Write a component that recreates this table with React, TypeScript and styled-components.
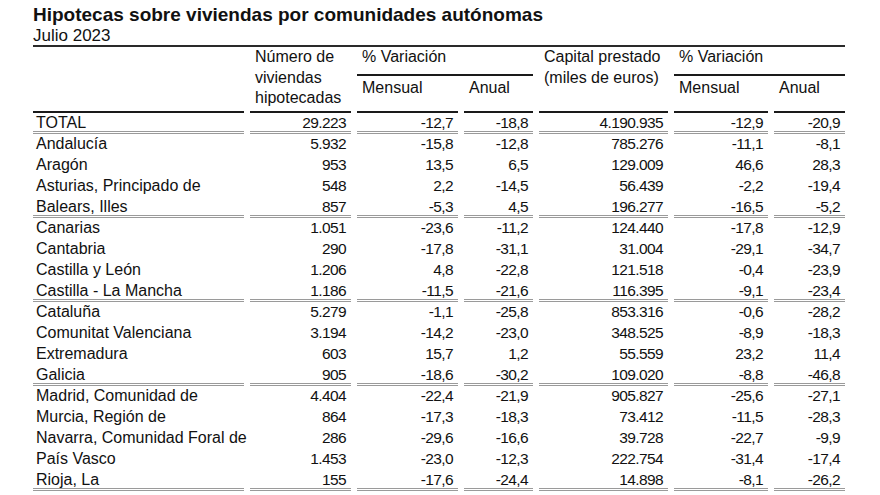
import React from "react";
import styled, { createGlobalStyle } from "styled-components";

const GlobalStyle = createGlobalStyle`
  body {
    margin: 0;
    background: #ffffff;
    color: #111;
    font-family: "Liberation Sans", Arial, sans-serif;
  }
`;

const COLS = "211px 101px 101px 69px 129px 94px 71px";

const Page = styled.div`
  padding: 4px 0 0 33px;
  width: 812px;
`;

const Title = styled.h1`
  margin: 0;
  font-size: 19px;
  line-height: 22px;
  font-weight: bold;
  color: #111;
`;

const Subtitle = styled.div`
  margin-top: 1px;
  font-size: 17px;
  line-height: 18px;
`;

const Table = styled.div`
  border-top: 2px solid #2a2a2a;
`;

const Head = styled.div`
  display: grid;
  grid-template-columns: ${COLS};
  grid-template-rows: 29px 37px;
  column-gap: 6px;
  font-size: 16px;
`;

const HeadCell = styled.div<{ $col: string; $row: string }>`
  grid-column: ${(p) => p.$col};
  grid-row: ${(p) => p.$row};
  box-sizing: border-box;
  padding: ${(p) => (p.$row === "2" ? "2px 0 0 5px" : "0 0 0 5px")};
  line-height: 20.5px;
  border-bottom: 2px solid #1a1a1a;
  white-space: nowrap;
`;

const Row = styled.div`
  display: grid;
  grid-template-columns: ${COLS};
  column-gap: 6px;
  height: 21px;
`;

const Cell = styled.div<{ $sep?: boolean; $num?: boolean }>`
  box-sizing: border-box;
  height: 21px;
  line-height: 19px;
  white-space: nowrap;
  border-bottom: ${(p) => (p.$sep ? "3px double #9a9a9a" : "none")};
  text-align: ${(p) => (p.$num ? "right" : "left")};
  padding: ${(p) => (p.$num ? "0 5px 0 0" : "0 0 0 3px")};
  font-size: ${(p) => (p.$num ? "15.5px" : "16px")};
  letter-spacing: ${(p) => (p.$num ? "-0.6px" : "0")};
`;

type Data = [string, string, string, string, string, string, string, boolean];

const rows: Data[] = [
  ["TOTAL", "29.223", "-12,7", "-18,8", "4.190.935", "-12,9", "-20,9", true],
  ["Andalucía", "5.932", "-15,8", "-12,8", "785.276", "-11,1", "-8,1", false],
  ["Aragón", "953", "13,5", "6,5", "129.009", "46,6", "28,3", false],
  ["Asturias, Principado de", "548", "2,2", "-14,5", "56.439", "-2,2", "-19,4", false],
  ["Balears, Illes", "857", "-5,3", "4,5", "196.277", "-16,5", "-5,2", true],
  ["Canarias", "1.051", "-23,6", "-11,2", "124.440", "-17,8", "-12,9", false],
  ["Cantabria", "290", "-17,8", "-31,1", "31.004", "-29,1", "-34,7", false],
  ["Castilla y León", "1.206", "4,8", "-22,8", "121.518", "-0,4", "-23,9", false],
  ["Castilla - La Mancha", "1.186", "-11,5", "-21,6", "116.395", "-9,1", "-23,4", true],
  ["Cataluña", "5.279", "-1,1", "-25,8", "853.316", "-0,6", "-28,2", false],
  ["Comunitat Valenciana", "3.194", "-14,2", "-23,0", "348.525", "-8,9", "-18,3", false],
  ["Extremadura", "603", "15,7", "1,2", "55.559", "23,2", "11,4", false],
  ["Galicia", "905", "-18,6", "-30,2", "109.020", "-8,8", "-46,8", true],
  ["Madrid, Comunidad de", "4.404", "-22,4", "-21,9", "905.827", "-25,6", "-27,1", false],
  ["Murcia, Región de", "864", "-17,3", "-18,3", "73.412", "-11,5", "-28,3", false],
  ["Navarra, Comunidad Foral de", "286", "-29,6", "-16,6", "39.728", "-22,7", "-9,9", false],
  ["País Vasco", "1.453", "-23,0", "-12,3", "222.754", "-31,4", "-17,4", false],
  ["Rioja, La", "155", "-17,6", "-24,4", "14.898", "-8,1", "-26,2", true],
];

const App: React.FC = () => {
  return (
    <>
      <GlobalStyle />
      <Page>
        <Title>Hipotecas sobre viviendas por comunidades autónomas</Title>
        <Subtitle>Julio 2023</Subtitle>
        <Table>
          <Head>
            <HeadCell $col="1" $row="1 / 3" />
            <HeadCell $col="2" $row="1 / 3">
              Número de
              <br />
              viviendas
              <br />
              hipotecadas
            </HeadCell>
            <HeadCell $col="3 / 5" $row="1">
              % Variación
            </HeadCell>
            <HeadCell $col="3" $row="2">
              Mensual
            </HeadCell>
            <HeadCell $col="4" $row="2">
              Anual
            </HeadCell>
            <HeadCell $col="5" $row="1 / 3">
              Capital prestado
              <br />
              (miles de euros)
            </HeadCell>
            <HeadCell $col="6 / 8" $row="1">
              % Variación
            </HeadCell>
            <HeadCell $col="6" $row="2">
              Mensual
            </HeadCell>
            <HeadCell $col="7" $row="2">
              Anual
            </HeadCell>
          </Head>
          {rows.map((r) => (
            <Row key={r[0]}>
              <Cell $sep={r[7]}>{r[0]}</Cell>
              {r.slice(1, 7).map((v, i) => (
                <Cell key={i} $sep={r[7]} $num>
                  {v}
                </Cell>
              ))}
            </Row>
          ))}
        </Table>
      </Page>
    </>
  );
};

export default App;
